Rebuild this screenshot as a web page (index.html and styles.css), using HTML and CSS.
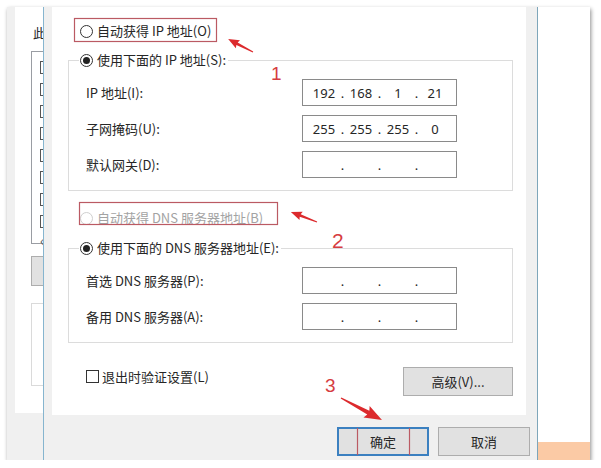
FILE: index.html
```html
<!DOCTYPE html>
<html lang="zh-CN">
<head>
    <meta charset="UTF-8">
    <title>Internet 协议版本 4 (TCP/IPv4) 属性</title>
    <link rel="stylesheet" href="styles.css">
</head>
<body>
    <div class="shot">
        <div class="bg-window">
            <div class="bg-title">此连接使用下列项目(O):</div>
            <div class="bg-list">
                <div class="bg-item"><span class="bg-check"></span>Microsoft 网络客户端</div>
                <div class="bg-item"><span class="bg-check"></span>VMware Bridge Protocol</div>
                <div class="bg-item"><span class="bg-check"></span>Microsoft 网络的文件和打印机共享</div>
                <div class="bg-item"><span class="bg-check"></span>QoS 数据包计划程序</div>
                <div class="bg-item"><span class="bg-check"></span>Microsoft 网络适配器多路传送器协议</div>
                <div class="bg-item"><span class="bg-check"></span>Microsoft LLDP 协议驱动程序</div>
                <div class="bg-item"><span class="bg-check"></span>Internet 协议版本 6 (TCP/IPv6)</div>
                <div class="bg-item"><span class="bg-check"></span>Internet 协议版本 4 (TCP/IPv4)</div>
                <div class="bg-scroll">&lsaquo;</div>
            </div>
            <div class="bg-button"></div>
            <div class="bg-box"></div>
        </div>
        <div class="edge"></div>
        <div class="dialog">
            <div class="page">
                <div class="opt opt-top"><span class="radio"></span>自动获得 IP 地址(O)</div>
                <fieldset class="group">
                    <legend><span class="opt"><span class="radio on"></span>使用下面的 IP 地址(S):</span></legend>
                    <div class="row">
                        <label>IP 地址(I):</label>
                        <div class="ip"><span class="f">192</span><span class="d">.</span><span class="f">168</span><span class="d">.</span><span class="f">1</span><span class="d">.</span><span class="f">21</span></div>
                    </div>
                    <div class="row">
                        <label>子网掩码(U):</label>
                        <div class="ip"><span class="f">255</span><span class="d">.</span><span class="f">255</span><span class="d">.</span><span class="f">255</span><span class="d">.</span><span class="f">0</span></div>
                    </div>
                    <div class="row">
                        <label>默认网关(D):</label>
                        <div class="ip"><span class="f"></span><span class="d">.</span><span class="f"></span><span class="d">.</span><span class="f"></span><span class="d">.</span><span class="f"></span></div>
                    </div>
                </fieldset>
                <div class="opt opt-off"><span class="radio"></span>自动获得 DNS 服务器地址(B)</div>
                <fieldset class="group group-dns">
                    <legend><span class="opt"><span class="radio on"></span>使用下面的 DNS 服务器地址(E):</span></legend>
                    <div class="row">
                        <label>首选 DNS 服务器(P):</label>
                        <div class="ip"><span class="f"></span><span class="d">.</span><span class="f"></span><span class="d">.</span><span class="f"></span><span class="d">.</span><span class="f"></span></div>
                    </div>
                    <div class="row">
                        <label>备用 DNS 服务器(A):</label>
                        <div class="ip"><span class="f"></span><span class="d">.</span><span class="f"></span><span class="d">.</span><span class="f"></span><span class="d">.</span><span class="f"></span></div>
                    </div>
                </fieldset>
                <div class="foot">
                    <div class="check-row"><span class="check"></span>退出时验证设置(L)</div>
                    <button class="btn btn-adv">高级(V)...</button>
                </div>
            </div>
            <div class="actions">
                <button class="btn btn-main">确定</button>
                <button class="btn">取消</button>
            </div>
        </div>
        <div class="edge edge-dark"></div>
        <div class="desktop"></div>
    </div>

    <!-- red hand-drawn notes laid over the screenshot -->
    <svg class="marks" width="601" height="468" viewBox="0 0 601 468">
        <rect x="74.5" y="18.5" width="142" height="23" class="note-box"/>
        <rect x="79.5" y="202.5" width="198" height="22" class="note-box"/>
        <line x1="357.5" y1="428" x2="357.5" y2="455" class="note-box"/>
        <line x1="409.5" y1="428" x2="409.5" y2="455" class="note-box"/>

        <polygon class="arrow" transform="translate(253 52) rotate(207.5)" points="0,-0.5 18,-1.4 17,-4.5 28,0 17,4.5 18,1.4 0,0.5"/>
        <polygon class="arrow" transform="translate(317 222) rotate(201)" points="0,-0.5 18,-1.4 17,-4.5 28,0 17,4.5 18,1.4 0,0.5"/>
        <polygon class="arrow" transform="translate(341 398) rotate(28.2)" points="0,-0.7 31,-2.2 29,-6.5 46.5,0 29,6.5 31,2.2 0,0.7"/>

        <text x="271" y="80" class="note-num">1</text>
        <text x="332" y="248" class="note-num note-big">2</text>
        <text x="325" y="392" class="note-num">3</text>
    </svg>
</body>
</html>
```

FILE: styles.css
```css
* {
  box-sizing: border-box;
}

body {
  margin: 0;
  background: #fff;
  font-family: "Noto Sans CJK SC", "Noto Sans", sans-serif;
  font-size: 13px;
  color: #262626;
}

.shot {
  display: flex;
  width: 583px;
  height: 453px;
  margin: 7px 0 0 7px;
  padding-left: 8px;
  background: #f0f0f0;
  box-shadow: 1px 2px 4px rgba(0, 0, 0, 0.45);
}

/* window behind the dialog, mostly hidden */
.bg-window {
  flex: none;
  width: 28px;
  height: 406px;
  padding: 17px 0 0 16px;
  background: #fff;
  overflow: hidden;
}

.bg-title {
  width: 240px;
  height: 18px;
  line-height: 18px;
  margin-left: 2px;
  white-space: nowrap;
}

.bg-list {
  width: 240px;
  height: 193px;
  margin-top: 9px;
  padding: 4px 0 0 8px;
  border: 1px solid #9a9da3;
}

.bg-item {
  display: flex;
  align-items: center;
  gap: 4px;
  height: 22px;
  white-space: nowrap;
}

.bg-check {
  flex: none;
  width: 13px;
  height: 13px;
  border: 1px solid #555;
}

.bg-scroll {
  height: 16px;
  line-height: 16px;
  font-size: 14px;
  color: #555;
}

.bg-button {
  width: 90px;
  height: 30px;
  margin-top: 12px;
  background: #e1e1e1;
  border: 1px solid #adadad;
}

.bg-box {
  width: 240px;
  height: 83px;
  margin-top: 17px;
  border: 1px solid #dadada;
}

.edge {
  flex: none;
  width: 1px;
  background: #86b5cf;
}

.edge-dark {
  background: #7ea6ba;
}

.dialog {
  flex: none;
  width: 493px;
  display: flex;
  flex-direction: column;
}

.page {
  height: 408px;
  margin: 0 11px 0 8px;
  padding: 15px 13px 0 16px;
  background: #fff;
}

.desktop {
  flex: none;
  width: 52px;
  background: linear-gradient(#fff 435px, #fbcaa5 435px);
}

/* radio options */
.opt {
  display: flex;
  align-items: center;
  gap: 4px;
  height: 18px;
  line-height: 18px;
  white-space: nowrap;
}

.opt-top {
  margin-left: 12px;
}

.opt-off {
  margin: 18px 0 0 12px;
  color: #a3a3a3;
}

.radio {
  flex: none;
  display: grid;
  place-items: center;
  width: 13px;
  height: 13px;
  border: 1px solid #333;
  border-radius: 50%;
  background: #fff;
}

.radio.on::after {
  content: "";
  width: 7px;
  height: 7px;
  border-radius: 50%;
  background: #222;
}

.opt-off .radio {
  border-color: #cfcfcf;
}

.group {
  margin: 11px 0 0;
  padding: 10px 0 12px;
  border: 1px solid #dcdcdc;
}

.group legend {
  margin-left: 10px;
  padding: 0 2px 0 1px;
}

.group-dns {
  margin-top: 12px;
}

.row {
  display: flex;
  align-items: center;
  height: 27px;
  padding-left: 17px;
}

.row + .row {
  margin-top: 9px;
}

.row label {
  width: 216px;
}

.ip {
  display: flex;
  align-items: center;
  width: 155px;
  height: 27px;
  padding-left: 5px;
  border: 1px solid #8a8a8a;
  font-family: "Noto Sans", sans-serif;
  line-height: 20px;
}

.ip .f {
  width: 32px;
  text-align: center;
}

.ip .d {
  width: 5px;
  text-align: center;
}

.foot {
  display: flex;
  justify-content: space-between;
  align-items: flex-start;
  margin-top: 24px;
  padding-left: 18px;
}

.check-row {
  display: flex;
  align-items: center;
  gap: 3px;
  height: 18px;
}

.check {
  width: 13px;
  height: 13px;
  border: 1px solid #333;
}

.btn {
  width: 92px;
  height: 29px;
  padding: 0;
  background: #e1e1e1;
  border: 1px solid #adadad;
  font-family: inherit;
  font-size: 13px;
  color: #262626;
}

.btn-adv {
  width: 110px;
}

.btn-main {
  border: 2px solid #3b80c0;
}

.actions {
  display: flex;
  justify-content: flex-end;
  gap: 9px;
  padding: 12px 7px 0 0;
}

.marks {
  position: absolute;
  top: 0;
  left: 0;
  pointer-events: none;
}

.note-box {
  fill: none;
  stroke: #bb5a63;
  stroke-width: 1.2;
}

.arrow {
  fill: #dc2a2d;
}

.note-num {
  font-family: "Liberation Sans", Arial, sans-serif;
  font-size: 19px;
  fill: #d63c40;
}

.note-big {
  font-size: 21px;
}
```
